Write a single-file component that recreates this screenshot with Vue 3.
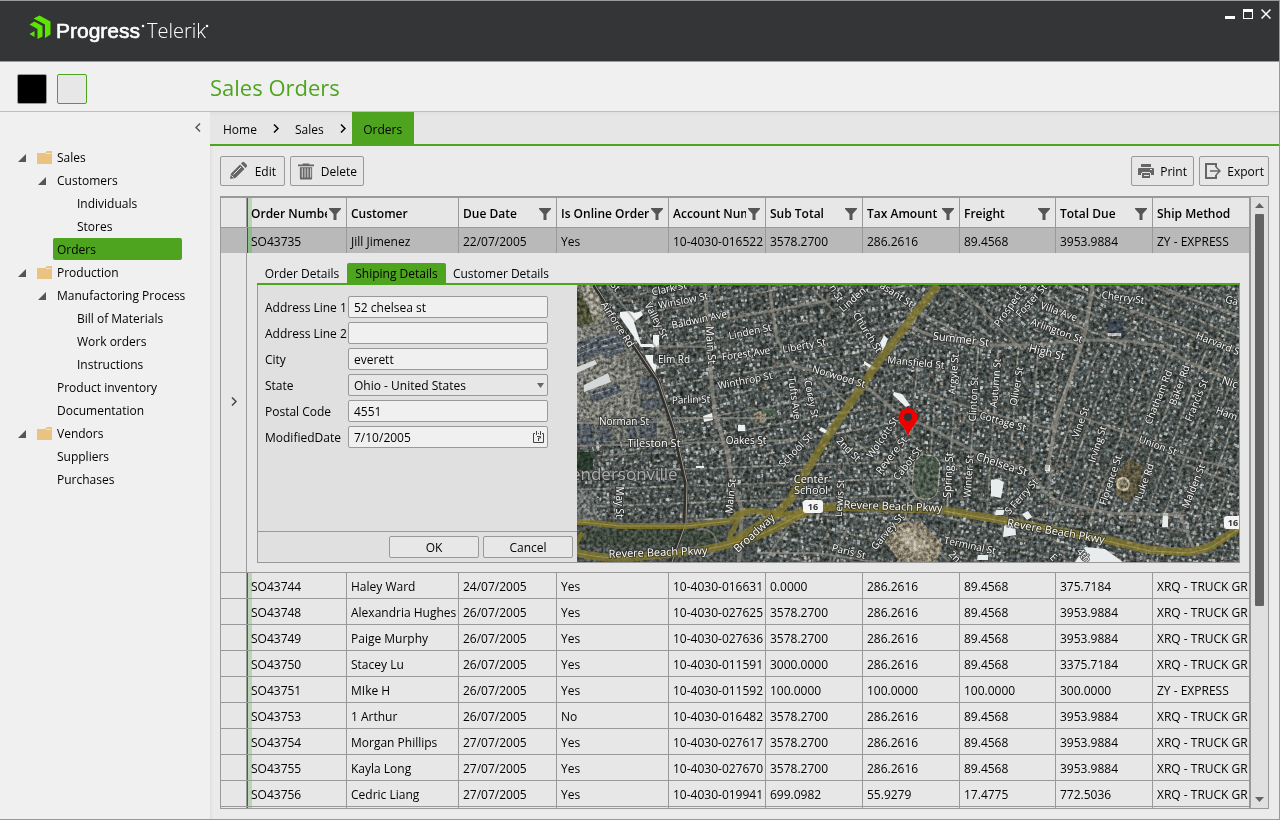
<script setup>
import { ref } from 'vue'

const form = ref({
  address1: '52 chelsea st',
  address2: '',
  city: 'everett',
  state: 'Ohio - United States',
  postal: '4551',
  modified: '7/10/2005'
})

const tree = [
  { text: 'Sales', level: 0, open: true },
  { text: 'Customers', level: 1, open: true },
  { text: 'Individuals', level: 2 },
  { text: 'Stores', level: 2 },
  { text: 'Orders', level: 1, active: true },
  { text: 'Production', level: 0, open: true },
  { text: 'Manufactoring Process', level: 1, open: true },
  { text: 'Bill of Materials', level: 2 },
  { text: 'Work orders', level: 2 },
  { text: 'Instructions', level: 2 },
  { text: 'Product inventory', level: 1 },
  { text: 'Documentation', level: 1 },
  { text: 'Vendors', level: 0, open: true },
  { text: 'Suppliers', level: 1 },
  { text: 'Purchases', level: 1 }
]

const columns = [
  { title: 'Order Number', filter: true },
  { title: 'Customer', filter: false },
  { title: 'Due Date', filter: true },
  { title: 'Is Online Order', filter: true },
  { title: 'Account Number', filter: true },
  { title: 'Sub Total', filter: true },
  { title: 'Tax Amount', filter: true },
  { title: 'Freight', filter: true },
  { title: 'Total Due', filter: true },
  { title: 'Ship Method', filter: false }
]

const selected = ['SO43735', 'Jill Jimenez', '22/07/2005', 'Yes', '10-4030-016522', '3578.2700', '286.2616', '89.4568', '3953.9884', 'ZY - EXPRESS']

const rows = [
  ['SO43744', 'Haley Ward', '24/07/2005', 'Yes', '10-4030-016631', '0.0000', '286.2616', '89.4568', '375.7184', 'XRQ - TRUCK GR'],
  ['SO43748', 'Alexandria Hughes', '26/07/2005', 'Yes', '10-4030-027625', '3578.2700', '286.2616', '89.4568', '3953.9884', 'XRQ - TRUCK GR'],
  ['SO43749', 'Paige Murphy', '26/07/2005', 'Yes', '10-4030-027636', '3578.2700', '286.2616', '89.4568', '3953.9884', 'XRQ - TRUCK GR'],
  ['SO43750', 'Stacey Lu', '26/07/2005', 'Yes', '10-4030-011591', '3000.0000', '286.2616', '89.4568', '3375.7184', 'XRQ - TRUCK GR'],
  ['SO43751', 'MIke H', '26/07/2005', 'Yes', '10-4030-011592', '100.0000', '100.0000', '100.0000', '300.0000', 'ZY - EXPRESS'],
  ['SO43753', '1 Arthur', '26/07/2005', 'No', '10-4030-016482', '3578.2700', '286.2616', '89.4568', '3953.9884', 'XRQ - TRUCK GR'],
  ['SO43754', 'Morgan Phillips', '27/07/2005', 'Yes', '10-4030-027617', '3578.2700', '286.2616', '89.4568', '3953.9884', 'XRQ - TRUCK GR'],
  ['SO43755', 'Kayla Long', '27/07/2005', 'Yes', '10-4030-027670', '3578.2700', '286.2616', '89.4568', '3953.9884', 'XRQ - TRUCK GR'],
  ['SO43756', 'Cedric Liang', '27/07/2005', 'Yes', '10-4030-019941', '699.0982', '55.9279', '17.4775', '772.5036', 'XRQ - TRUCK GR']
]

/* Street labels: text, centre x, centre y, rotation, size */
const labels = [
  ['St', 39, 1, 50, 10], ['Clark St', 92, 3, -12, 10], ['Winslow St', 106, 15, -11, 10],
  ['Valley St', 80, 35, 62, 10], ['Airforce Rd', 41, 39, 57, 10], ['Baldwin Ave', 122, 34, -12, 10],
  ['Linden St', 173, 46, -12, 10], ['Main St', 134, 60, 86, 11], ['Elm Rd', 97, 74, 0, 10],
  ['Forest Ave', 169, 68, -8, 10], ['Liberty St', 227, 60, -10, 10], ['Winthrop St', 168, 95, -11, 10],
  ['Norwood St', 262, 91, 17, 10], ['Church St', 291, 47, 58, 10], ['Linden', 275, 14, -42, 10],
  ['n St', 260, 8, 60, 10], ['asant St', 320, 9, 33, 10], ['Parlin St', 114, 114, -2, 10],
  ['Norman St', 47, 136, 0, 10], ['Tileston St', 77, 158, 0, 11], ['Oakes St', 169, 155, 0, 10],
  ['Tufts Ave', 218, 113, 82, 10], ['Corey St', 235, 114, 78, 10], ['School St', 218, 165, -46, 10],
  ['2nd St', 272, 164, 45, 10], ['Wolcott St', 305, 152, -55, 10], ['Revere St', 314, 170, -52, 10],
  ['Cabot St', 330, 178, -52, 10], ['Mansfield St', 339, 77, 6, 10],
  ['Center', 234, 194, 0, 11], ['School', 234, 205, 0, 11], ['May St', 43, 217, 90, 10],
  ['Main St', 153, 211, -84, 10], ['Lewis St', 262, 213, -86, 10],
  ['Revere Beach Pkwy', 316, 221, 2, 11], ['Broadway', 177, 248, -42, 11],
  ['Revere Beach Pkwy', 81, 267, -2, 11], ['Garvey St', 310, 246, -50, 10], ['Paris St', 272, 266, 14, 10],
  ['Cherry St', 546, 12, 8, 10], ['Villa Ave', 482, 26, 20, 10], ['Arlington St', 480, 45, 20, 10],
  ['High St', 470, 67, 14, 11], ['Summer St', 384, 54, 7, 11], ['Prospect S', 433, 20, -55, 10],
  ['Foster St', 454, 15, -48, 10], ['Ga', 655, 15, 15, 10], ['Harvard S', 641, 58, 22, 10],
  ['Nic', 653, 97, 18, 11], ['Ham', 650, 128, 20, 10], ['Argyle St', 376, 89, -85, 10],
  ['Clinton St', 396, 114, -87, 10], ['Autumn St', 418, 98, -85, 10], ['Oliver St', 439, 101, -80, 10],
  ['Cottage St', 426, 136, 16, 10], ['Chelsea St', 425, 179, 18, 11], ['Spring St', 371, 190, -87, 11],
  ['Winter St', 391, 191, -86, 10], ['S Ferry St', 444, 211, -48, 10], ['Vine St', 503, 137, -70, 10],
  ['Irving St', 520, 159, -72, 10], ['Florence St', 533, 195, -72, 10], ['Luke Rd', 567, 196, -70, 10],
  ['Chatham Rd', 581, 112, -68, 10], ['Baker Rd', 602, 100, -70, 10], ['Francis St', 619, 115, -68, 10],
  ['Union St', 581, 160, 20, 10], ['Malden St', 616, 201, -68, 10],
  ['Revere Beach Pkwy', 479, 246, 10, 11], ['Terminal St', 393, 260, 12, 10],
  ['2n', 378, 271, 45, 10], ['4th', 507, 270, 50, 10], ['E', 477, 272, 45, 10]
]

/* Deterministic generator, so the aerial texture is the same on each load */
let seed = 7919
const rand = () => {
  seed = (seed * 16807) % 2147483647
  return seed / 2147483647
}

const tones = ['#2a302c', '#333a35', '#3b423e', '#565d5e', '#666d6f', '#757c7e', '#8c9293', '#a9aeaf', '#736c62']
const roofs = tones.map((fill) => ({ fill, d: '' }))
let lanes = ''

/* Fills one district with parallel lanes and the roofs and trees along them */
const district = (x0, y0, w, h, deg, pitch) => {
  const a = (deg * Math.PI) / 180
  const ux = Math.cos(a)
  const uy = Math.sin(a)
  const cx = x0 + w / 2
  const cy = y0 + h / 2
  const reach = Math.hypot(w, h) / 2
  const inside = (x, y) => x >= x0 && x <= x0 + w && y >= y0 && y <= y0 + h
  for (let v = -reach; v < reach; v += pitch) {
    for (let u = -reach; u < reach; u += 4) {
      const lx = cx + u * ux - v * uy
      const ly = cy + u * uy + v * ux
      if (inside(lx, ly)) lanes += `M${lx.toFixed(1)} ${ly.toFixed(1)}l${(4 * ux).toFixed(1)} ${(4 * uy).toFixed(1)}`
      for (let k = 3; k < pitch - 2; k += 4) {
        const s = u + rand() * 2
        const t = v + k + rand() * 2
        const x = cx + s * ux - t * uy
        const y = cy + s * uy + t * ux
        if (!inside(x, y)) continue
        const i = Math.floor(rand() * tones.length)
        const len = 1.4 + rand() * 2
        const wid = 1.4 + rand() * 2.4
        roofs[i].d += `M${x.toFixed(1)} ${y.toFixed(1)}l${(len * ux).toFixed(1)} ${(len * uy).toFixed(1)} ${(-wid * uy).toFixed(1)} ${(wid * ux).toFixed(1)} ${(-len * ux).toFixed(1)} ${(-len * uy).toFixed(1)}z`
      }
    }
  }
}
district(0, 0, 335, 170, -10, 19)
district(0, 165, 335, 70, -2, 17)
district(325, 0, 155, 62, 32, 19)
district(325, 62, 155, 165, 94, 20)
district(470, 0, 193, 60, 22, 17)
district(470, 60, 193, 180, 110, 17)
district(180, 228, 483, 49, 12, 18)
</script>

<template>
  <div class="window">
    <header class="titlebar">
      <svg class="logo" width="200" height="36" viewBox="0 0 200 36" role="img" aria-label="Progress Telerik">
        <path fill="#5ce500" d="M5.500 4.500 11.500 1.500 22.500 7.500v13L17 24V10.500zM1.500 10.500 6.500 7.500l8 4.500v10.500l-5 2.500V15zM1.500 20 6.500 17V23z" />
        <text x="28" y="24" class="brand">Progress</text>
        <circle cx="115" cy="12" r="1.300" fill="#fff" />
        <text x="119" y="24" class="product">Telerik</text>
        <circle cx="179" cy="12" r="1.300" fill="#fff" />
      </svg>
      <div class="caption">
        <button type="button" aria-label="Minimize"><svg width="10" height="10"><path fill="#fff" d="M0 7h10v3H0z" /></svg></button>
        <button type="button" aria-label="Maximize"><svg width="10" height="10"><path fill="#fff" fill-rule="evenodd" d="M0 0h10v10H0zM1 3v6h8V3z" /></svg></button>
        <button type="button" aria-label="Close"><svg width="10" height="10"><path stroke="#fff" stroke-width="1.500" d="M.5.500l9 9m0-9l-9 9" /></svg></button>
      </div>
    </header>

    <div class="heading">
      <div class="themes">
        <button type="button" class="swatch dark" aria-label="Dark theme"></button>
        <button type="button" class="swatch light" aria-label="Light theme"></button>
      </div>
      <h1>Sales Orders</h1>
    </div>

    <div class="body">
      <nav class="sidebar" aria-label="Sections">
        <button type="button" class="collapse" aria-label="Collapse">
          <svg width="6" height="9" viewBox="0 0 6 9"><path d="M5 .5l-4 4 4 4" fill="none" stroke="#555" stroke-width="1.500" /></svg>
        </button>
        <ul>
          <li v-for="node in tree" :key="node.text" :class="['level' + node.level, { active: node.active }]">
            <svg v-if="node.open" class="arrow" width="8" height="8"><path d="M8 0v8H0z" fill="#555" /></svg>
            <svg v-if="node.level === 0" class="folder" width="15" height="13"><path d="M0 2h8l2-2h5v13H0z" fill="#eac282" /><path d="M9 2.500h5" stroke="#f6e3c4" /></svg>
            <a href="#">{{ node.text }}</a>
          </li>
        </ul>
      </nav>

      <main>
        <nav class="crumbs" aria-label="Breadcrumb">
          <a href="#">Home</a>
          <svg width="6" height="9" viewBox="0 0 6 9"><path d="M1 .5l4 4-4 4" fill="none" stroke="#000" stroke-width="1.500" /></svg>
          <a href="#">Sales</a>
          <svg width="6" height="9" viewBox="0 0 6 9"><path d="M1 .5l4 4-4 4" fill="none" stroke="#000" stroke-width="1.500" /></svg>
          <a href="#" class="current" aria-current="page">Orders</a>
        </nav>

        <section class="content">
          <div class="toolbar">
            <button type="button" class="edit">
              <svg width="18" height="18" viewBox="0 0 18 18"><path fill="#666" d="M1 17l1-5.500L11 2.500l4.500 4.500L6.500 16zM12 1.500L13.500 0h1.500l3 3v1.500L16.500 6z" /><path d="M4.500 12.500l7.500-7.500M2.500 13.500l2 2" stroke="#e7e7e7" fill="none" /></svg>
              <span>Edit</span>
            </button>
            <button type="button" class="delete">
              <svg width="16" height="17" viewBox="0 0 17 17"><path fill="#666" fill-rule="evenodd" d="M5 0h7v1h5v2H0V1h5zM2 4h13v12q0 1-1 1H3q-1 0-1-1zM4 5v10h1V5zm3 0v10h1V5zm3 0v10h1V5zm3 0v10h1V5z" /></svg>
              <span>Delete</span>
            </button>
            <span class="spacer"></span>
            <button type="button" class="print">
              <svg width="16" height="16" viewBox="0 0 16 16"><path fill="#666" fill-rule="evenodd" d="M3 1h10v3H3zM1 5h14q1 0 1 1v6h-3v-2H3v2H0V6q0-1 1-1zm11 1v1h2V6zM4 9h8v6H4zm2 3v1h5v-1z" /></svg>
              <span>Print</span>
            </button>
            <button type="button" class="export">
              <svg width="16" height="16" viewBox="0 0 16 16"><path fill="none" stroke="#666" stroke-width="2" d="M11 4V1H1v14h10v-3" /><path fill="none" stroke="#666" stroke-width="1.500" d="M5 8h10M11 4l4 4-4 4" /></svg>
              <span>Export</span>
            </button>
          </div>

          <div class="grid">
            <div class="viewport">
              <table>
                <colgroup>
                  <col class="c26" /><col class="c100" /><col class="c112" /><col class="c98" /><col class="c112" />
                  <col class="c97" /><col class="c97" /><col class="c97" /><col class="c96" /><col class="c97" /><col />
                </colgroup>
                <thead>
                  <tr>
                    <th class="indicator" aria-label="Row"></th>
                    <th v-for="(c, i) in columns" :key="c.title" :class="{ frozen: i === 0 }" scope="col">
                      <div class="th">
                        <span>{{ c.title }}</span>
                        <svg v-if="c.filter" width="12" height="12"><path d="M0 0h12v1L7.500 6v6h-3V6L0 1z" fill="#555" /></svg>
                      </div>
                    </th>
                  </tr>
                </thead>
                <tbody>
                  <tr class="selected">
                    <td class="indicator"></td>
                    <td v-for="(v, i) in selected" :key="i" :class="{ frozen: i === 0 }">{{ v }}</td>
                  </tr>
                  <tr class="detail">
                    <td class="indicator">
                      <svg width="6" height="9" viewBox="0 0 6 9"><path d="M1 .5l4 4-4 4" fill="none" stroke="#444" stroke-width="1.500" /></svg>
                    </td>
                    <td colspan="10">
                      <div class="tabs" role="tablist">
                        <button type="button" role="tab" class="t90">Order Details</button>
                        <button type="button" role="tab" class="t99 on" aria-selected="true">Shiping Details</button>
                        <button type="button" role="tab" class="t110">Customer Details</button>
                      </div>
                      <div class="panel">
                        <form @submit.prevent>
                          <div class="fields">
                            <label for="a1">Address Line 1</label><input id="a1" v-model="form.address1" type="text" />
                            <label for="a2">Address Line 2</label><input id="a2" v-model="form.address2" type="text" />
                            <label for="city">City</label><input id="city" v-model="form.city" type="text" />
                            <label for="state">State</label>
                            <div class="field">
                              <select id="state" v-model="form.state"><option>Ohio - United States</option></select>
                              <svg width="7" height="5"><path d="M0 0h7L3.500 5z" fill="#666" /></svg>
                            </div>
                            <label for="zip">Postal Code</label><input id="zip" v-model="form.postal" type="text" />
                            <label for="mod">ModifiedDate</label>
                            <div class="field">
                              <input id="mod" v-model="form.modified" type="text" />
                              <svg class="cal" width="11" height="12" viewBox="0 0 11 12"><path d="M2 2.500H.5v9h10v-9H9M5 2.500h1M3.500 0v4M7.500 0v4M4 5.500h3.500v1.500h-2v3" fill="none" stroke="#444" /></svg>
                            </div>
                          </div>
                          <div class="actions">
                            <button type="submit">OK</button>
                            <button type="button">Cancel</button>
                          </div>
                        </form>

                        <svg class="map" viewBox="0 0 662 277" preserveAspectRatio="xMinYMin slice" role="img" aria-label="Map">
                          <defs>
                            <filter id="grain" x="0" y="0" width="100%" height="100%" color-interpolation-filters="sRGB">
                              <feTurbulence type="fractalNoise" baseFrequency="0.3" numOctaves="3" seed="4" />
                              <feColorMatrix values="1.800 0 0 0 -.36  1.800 0 0 0 -.36  1.800 0 0 0 -.36  0 0 0 0 1" />
                            </filter>
                          </defs>
                          <rect width="662" height="277" fill="#474d4b" />
                          <path :d="lanes" stroke="#74756f" stroke-width="2" fill="none" />
                          <path v-for="r in roofs" :key="r.fill" :d="r.d" :fill="r.fill" />

                          <path d="M0 0h14l70 95 14 50v12H0z" fill="#686a64" />
                          <path d="M0 5l22 31-22 5z" fill="#4a4d35" />
                          <path d="M3 0h13l13 30-12 8z" fill="#8a887b" />
                          <path d="M0 42l26-2 30 50-4 44H0z" fill="#74756f" />
                          <g fill="#4f565c">
                            <path d="M0 58l18-7 8 16-26 12zM18 53l24-7 6 20-20 8zM12 107l28-9 5 9-30 11zM60 94l15-4 9 16-18 4zM64 115l20-3 4 11-22 3zM0 139h17v23H0zM20 142h15v14H20zM50 133h30v20H50z" />
                          </g>
                          <path d="M0 64l20-9M0 70l22-9M22 56l20-5M24 62l20-5M26 68l20-5M14 110l26-8" stroke="#7d858c" fill="none" />
                          <path d="M0 167h16v18H0z" fill="#28372a" />
                          <path d="M0 206h20v30H0z" fill="#666b69" />
                          <path d="M0 246q40-6 104-3l44 1q-4 12-20 14l-58 3-70-2z" fill="#3c463b" />
                          <path d="M178 125h22l-14 14h-10z" fill="#465846" />
                          <ellipse cx="183" cy="132" rx="7" ry="6" fill="#82796a" />
                          <path d="M511 277l-12-15 7-2 30 17z" fill="#636c75" />
                          <path d="M531 34h15v14h-15z" fill="#3c444c" />
                          <path d="M531 48h13v3h-13z" fill="#b9bbba" />
                          <path d="M318 238l26-2 22 24-6 17h-37l-15-20z" fill="#857d6b" />
                          <path d="M322 246l12-2 4 9 10 2 2 10-14 2-10-8z" fill="#aaa28f" />
                          <rect x="336" y="170" width="26" height="44" rx="11" fill="#4a564a" stroke="#a09f90" stroke-width="1" transform="rotate(5 349 192)" />
                          <path d="M539 190l13-17 14 8-4 28-14 8-9-8z" fill="#57523f" />
                          <circle cx="546" cy="199" r="6" fill="#7d7a68" stroke="#b8a98b" stroke-width="2" />

                          <rect class="noise" width="662" height="277" filter="url(#grain)" />

                          <path d="M0 82l18-7 2 4-20 9zM7 100l24-12 3 9-27 10z" fill="#d5d8d9" />
                          <path d="M43 27l9-1 6 2 6-2 2 4-9 7 7 22h12v-9h6v12H64L43 32zM68 70h8v8l4 2-2 8-9-15z" fill="#eef1f2" />
                          <path d="M126 131l9-3 1 7-9 2zM161 140h7v6h-7zM244 142l9 5-2 3-9-5zM307 50l4 4-6 14-3-8zM287 76l12 7-3 2-9-6zM317 107l8 2 8 11-4 2-13-12zM119 181h8v2h-8z" fill="#edf0f1" />
                          <path d="M414 195l6-1 7 3-3 16-10-2zM427 241l11-4 1 13-13 2zM419 225h9l-2 5h-8zM445 229l6-3 4 6-5 3zM508 262l20 2 18 13h-48zM401 270h10v5h-11zM586 228h5v14h-6zM468 180h5v6h-5z" fill="#e9ecec" />
                          <g fill="none" stroke="#99948a" stroke-opacity=".6" stroke-width="2">
                            <path d="M128 0l5 81 5 50 12 34 5 33 10 27-3 52" stroke-width="4" />
                            <path d="M192 0l8 55 17 26 68 17 33 28 45 22 37 20 53 17 13 20 17 13 50 10 70 2 13 32" stroke-width="3" />
                            <path d="M323 38l43 17 47 5h43l54-5 40 1 33 5 30 17 49 20" stroke-width="3" />
                            <path d="M516 0l-8 48-15 47-13 36-7 40-4 14" stroke-width="4" />
                            <path d="M0 161l145-4 75-2M0 138l98-1M80 61l54 1M98 133h100" />
                            <path d="M30 0l55 70M145 98l60-12M245 95l30 28M235 3l23 24M150 34l100-18" />
                            <path d="M340 26l40 20 32 16M380 0l50 50 12 11M456 0l52 40M486 125l70 26 44 19 62 15M340 105l60 20 80 20M555 25l107 38M570 0l92 30M610 180l50 20" />
                            <path d="M270 150l60 50 20 24M256 277l14-34M327 232l45 45M120 245a14 14 0 1 1-2 25l-4-4M186 277l26-36M180 268h60l60 9M60 92l-8 36 10 22" />
                          </g>
                          <path d="M17 0l33 51 30 44 17 50 12 53-1 40-14 39" fill="none" stroke="#302f2c" stroke-width="4" />
                          <path d="M18 0l33 51 30 44 17 50 12 53-1 40-14 39" fill="none" stroke="#a39f96" stroke-width="1" />
                          <g fill="none" stroke="#85792c" stroke-opacity=".75">
                            <path d="M361 0l-21 26-38 50-49 72-23 37-17 30-16 16-40 25" stroke-width="8" />
                            <path d="M0 237q8 0 43 4h67l43-5q9-10 20-10t27 3q14 2 30-4" stroke-width="6" />
                            <path d="M0 268q30 7 60 4l40-4q32-3 57-10 20-4 43-16 17-10 36-18 15-3 31-2l99 3 64 11 100 19 43 10 40 2 20-5 29-19" stroke-width="8" />
                            <path d="M0 268q-4-10 6-20M157 258q-8-6 0-14 6-18 14-16" stroke-width="5" />
                          </g>
                          <g fill="none" stroke="#b5a858" stroke-opacity=".6" stroke-width="1">
                            <path d="M0 237q8 0 43 4h67l43-5M0 268q30 7 60 4l40-4q32-3 57-10 20-4 43-16 17-10 36-18M367 226l63 11 100 19 43 10 40 2 20-5 29-19" />
                          </g>

                          <text x="-6" y="195" class="town">endersonville</text>
                          <text
                            v-for="(l, i) in labels"
                            :key="i"
                            class="street"
                            :x="l[1]"
                            :y="l[2] + 4"
                            :font-size="l[4]"
                            :transform="`rotate(${l[3]} ${l[1]} ${l[2]})`"
                          >{{ l[0] }}</text>

                          <rect x="226" y="215" width="20" height="13" rx="3" fill="#f4f4f4" />
                          <text x="236" y="225" class="shield">16</text>
                          <rect x="647" y="231" width="20" height="13" rx="3" fill="#f4f4f4" />
                          <text x="656" y="241" class="shield">16</text>
                          <path d="M331 152q-1-6-7-13a9.500 9.500 0 1 1 14 0q-6 7-7 13z" fill="#ef0000" />
                          <circle cx="331" cy="132" r="4" fill="#333" />
                        </svg>
                      </div>
                    </td>
                  </tr>
                  <tr v-for="r in rows" :key="r[0]">
                    <td class="indicator"></td>
                    <td v-for="(v, i) in r" :key="i" :class="{ frozen: i === 0 }">{{ v }}</td>
                  </tr>
                  <tr>
                    <td class="indicator"></td>
                    <td v-for="n in 10" :key="n" :class="{ frozen: n === 1 }"></td>
                  </tr>
                </tbody>
              </table>
            </div>
            <div class="scrollbar">
              <svg width="9" height="5"><path d="M0 5h9L4.500 0z" fill="#636363" /></svg>
              <div class="track"><div class="thumb"></div></div>
              <svg width="9" height="5"><path d="M0 0h9L4.500 5z" fill="#636363" /></svg>
            </div>
          </div>
        </section>
      </main>
    </div>
  </div>
</template>

<style>
body { background: #fff; }
</style>

<style scoped>
* { box-sizing: border-box; }
.window {
  display: flex; flex-direction: column; height: calc(100vh - 1px); margin-right: 1px;
  border: 1px solid #999; border-left: 0; background: #f0f0f0; color: #000;
  font: 12px/16px "Open Sans", "Noto Sans", sans-serif; overflow: hidden;
}
button, input, select { font: inherit; color: inherit; margin: 0; }
a { color: inherit; text-decoration: none; }
svg { display: block; flex: none; }

.titlebar { flex: none; display: flex; justify-content: space-between; height: 61px; background: #343536; border-bottom: 1px solid #999; }
.logo { margin: 13px 0 0 28px; }
.brand { font: 21px "Liberation Sans", sans-serif; fill: #fff; stroke: #fff; stroke-width: 0.6px; }
.product { font: 300 20px "Open Sans", sans-serif; fill: #fff; }
.caption { display: flex; gap: 8px; padding: 8px 8px 0 0; align-items: flex-start; }
.caption button { border: 0; background: none; padding: 0; }

.heading { flex: none; display: flex; height: 50px; border-bottom: 1px solid #bdbdbd; }
.themes { width: 210px; flex: none; display: flex; gap: 10px; padding: 12px 0 0 17px; }
.swatch { width: 30px; height: 30px; border-radius: 2px; padding: 0; }
.dark { background: #000; border: 1px solid #999; }
.light { background: #e7e7e7; border: 1px solid #4fa41f; }
h1 { margin: 0; font: 400 22px/50px "Open Sans", sans-serif; color: #4fa41f; }

.body { flex: 1; display: flex; min-height: 0; }
.sidebar { flex: none; width: 210px; }
.collapse { display: block; margin: 11px 9px 0 auto; padding: 0; border: 0; background: none; }
.sidebar ul { list-style: none; margin: 14px 28px 0 18px; padding: 0; }
.sidebar li { display: flex; align-items: center; height: 23px; white-space: nowrap; }
.sidebar li a { line-height: 23px; }
.arrow { margin-right: 11px; }
.folder { margin-right: 5px; }
.level1 { padding-left: 39px; }
.level1:has(.arrow) { padding-left: 20px; }
.level2 { padding-left: 59px; }
.sidebar .active { padding-left: 35px; align-items: flex-start; }
.sidebar .active a { flex: 1; background: #4fa41f; border-radius: 2px; padding-left: 4px; height: 22px; }

main { flex: 1; min-width: 0; display: flex; flex-direction: column; background: linear-gradient(90deg, #e0e0e0, #ebebeb 4px); }
.crumbs { flex: none; display: flex; align-items: center; height: 34px; padding-left: 13px; background: linear-gradient(#e0e0e0, #e6e6e6 4px); border-bottom: 2px solid #4fa41f; }
.crumbs a { line-height: 35px; align-self: stretch; }
.crumbs svg { margin: 0 16px; }
.crumbs svg:has(+ .current) { margin-right: 6px; }
.crumbs .current { width: 62px; text-align: center; background: #4fa41f; }

.content { flex: 1; min-height: 0; display: flex; flex-direction: column; gap: 10px; padding: 10px; }
.toolbar { display: flex; gap: 5px; }
.spacer { flex: 1; }
.toolbar button { display: flex; align-items: center; justify-content: space-between; height: 30px; padding: 0 6px 0 7px; background: #e7e7e7; border: 1px solid #999; border-radius: 2px; }
.toolbar button span { padding-top: 1px; }
.toolbar .edit { width: 65px; padding: 0 8px; }
.toolbar .delete { width: 74px; }
.toolbar .print { width: 63px; padding-left: 6px; }
.toolbar .export { width: 70px; padding: 0 4px 0 5px; }

.grid { flex: 1; min-height: 0; display: flex; border: 1px solid #999; background: #e7e7e7; }
.viewport { flex: 1; min-width: 0; overflow: hidden; border-top: 1px solid #999; }
table { width: 100%; table-layout: fixed; border-collapse: separate; border-spacing: 0; }
.c26 { width: 26px; }
.c96 { width: 96px; }
.c97 { width: 97px; }
.c98 { width: 98px; }
.c100 { width: 100px; }
.c112 { width: 112px; }
td, th { height: 26px; padding: 3px 0 0 4px; border: solid #999; border-width: 0 1px 1px 0; white-space: nowrap; overflow: hidden; text-align: left; }
th { height: 30px; font-weight: 600; }
.th { display: flex; align-items: center; padding-right: 5px; }
.th span { flex: 1; min-width: 0; overflow: hidden; }
.th svg { margin-left: 2px; }
.frozen { background: linear-gradient(90deg, #0b8a1a 1px, #b9d5b4 1px, #b9d5b4 5px, transparent 5px); }
.selected td { background-color: #b9b9b9; height: 25px; border-bottom: 0; }
.selected .frozen { background-image: linear-gradient(90deg, #0b7a1a 1px, #8fba8c 1px, #8fba8c 5px, transparent 5px); }
.selected .indicator { border-right-color: #b9b9b9; }
.detail td { height: 320px; padding: 10px 9px 9px 10px; vertical-align: top; }
.detail td.indicator { padding: 0 0 23px; vertical-align: middle; }
.detail .indicator svg { margin: 0 auto; }

.tabs { display: flex; border-bottom: 2px solid #4fa41f; height: 22px; }
.tabs button { height: 20px; padding: 2px 0 0; border: 0; background: none; white-space: nowrap; }
.tabs .on { background: #4fa41f; border-radius: 2px 2px 0 0; }
.t90 { width: 90px; }
.t99 { width: 99px; }
.t110 { width: 110px; }
.panel { display: flex; height: 278px; border: solid #999; border-width: 0 1px 1px 1px; background: #e0e0e0; }
form { flex: none; width: 319px; display: flex; flex-direction: column; }
.fields { flex: 1; display: grid; grid-template-columns: 83px 200px; grid-auto-rows: 22px; align-content: start; align-items: center; gap: 4px 0; padding: 11px 0 0 7px; }
.fields label { padding-top: 2px; white-space: nowrap; }
.fields input, .fields select { width: 200px; height: 22px; padding: 1px 5px 0; background: #f0f0f0; border: 1px solid #999; border-radius: 2px; }
.fields select { appearance: none; background: #e7e7e7; padding-top: 2px; }
.field { display: grid; align-items: center; }
.field > * { grid-area: 1 / 1; }
.field svg { justify-self: end; margin-right: 4px; pointer-events: none; }
.actions { display: flex; gap: 4px; justify-content: flex-end; height: 31px; border-top: 1px solid #999; padding: 4px 4px 0 0; }
.actions button { width: 90px; height: 22px; padding: 2px 0 0; background: #e7e7e7; border: 1px solid #999; border-radius: 2px; }

.map { flex: 1; min-width: 0; height: 277px; overflow: hidden; }
.noise { mix-blend-mode: overlay; opacity: 0.5; }
.street { fill: #fff; stroke: #2a2c2a; stroke-opacity: 0.75; stroke-width: 2px; paint-order: stroke; text-anchor: middle; font-family: "Open Sans", sans-serif; font-weight: 500; }
.town { font: 17px "Open Sans", sans-serif; fill: #d0d2d2; fill-opacity: 0.75; stroke: #222; stroke-opacity: 0.5; stroke-width: 2px; paint-order: stroke; }
.shield { font: 700 9px "Open Sans", sans-serif; fill: #333; text-anchor: middle; }

.scrollbar { flex: none; width: 18px; display: flex; flex-direction: column; align-items: center; gap: 6px; padding: 6px 0; border-left: 1px solid #999; background: #e0e0e0; }
.track { flex: 1; width: 9px; }
.thumb { height: 68%; background: #636363; border-radius: 1px; }
</style>
